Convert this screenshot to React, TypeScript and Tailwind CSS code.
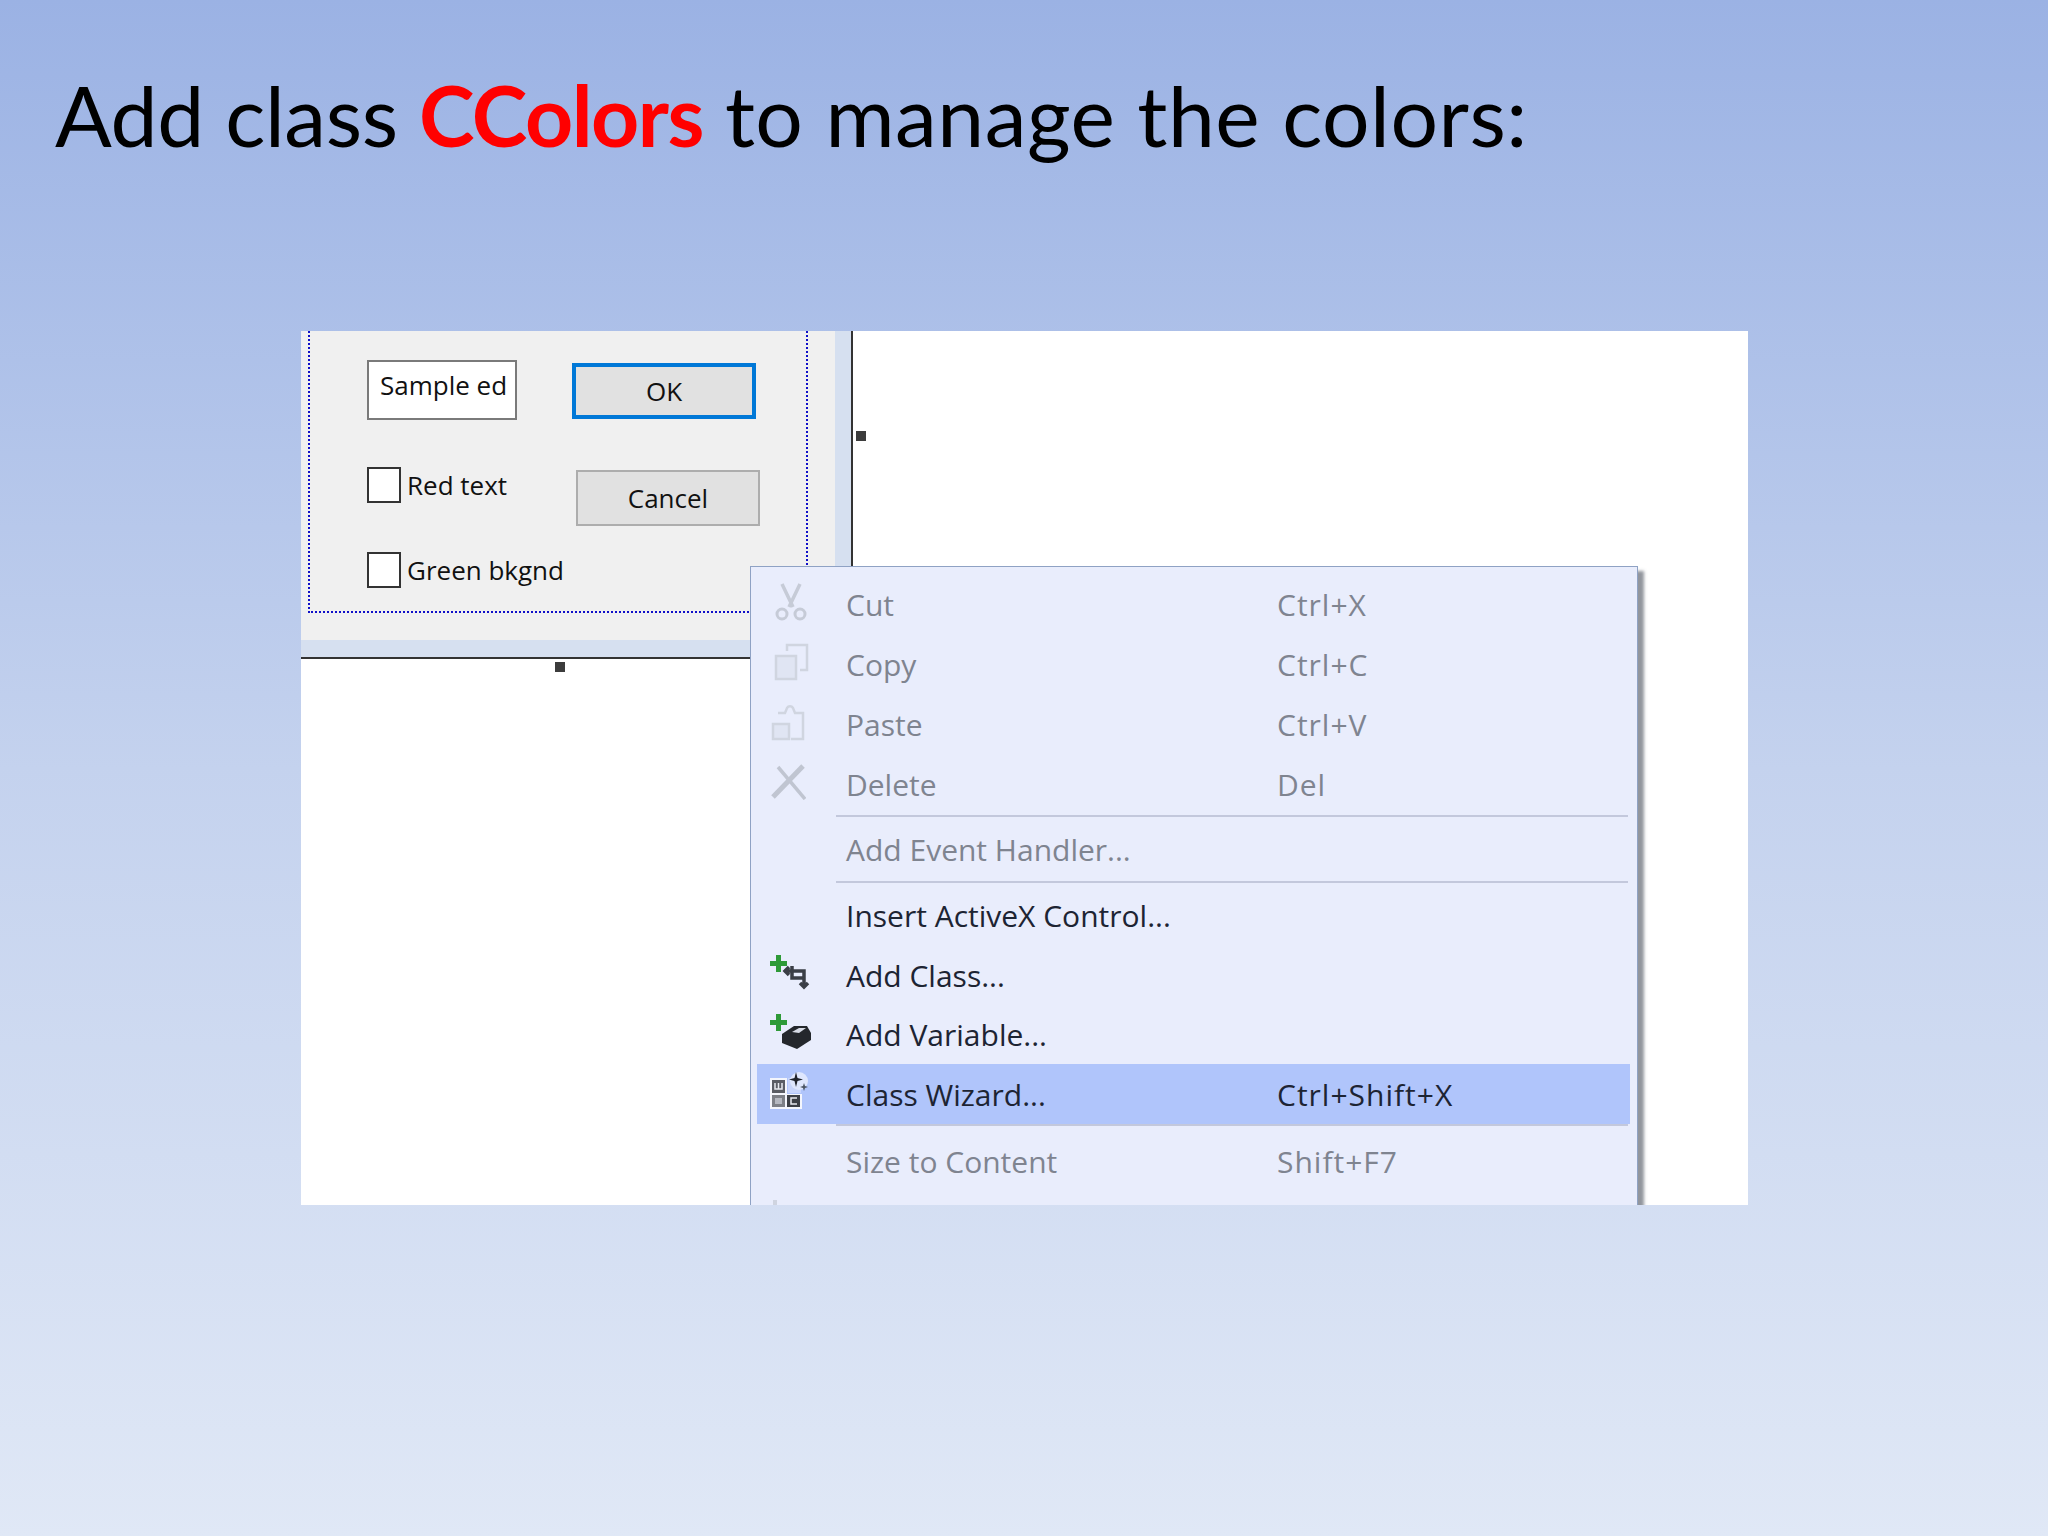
const uiFont = "font-['Open_Sans',sans-serif]";

const CutIcon = () => (
  <svg className="ml-[5px]" width="32" height="38" viewBox="0 0 32 38" fill="none" stroke="#c6cbd7" strokeWidth="3.500">
    <path d="M7 1l11 23M25 1L14 24" />
    <circle cx="7" cy="31" r="5" strokeWidth="3" />
    <circle cx="25" cy="31" r="5" strokeWidth="3" />
  </svg>
);

const CopyIcon = () => (
  <svg className="ml-[4px]" width="36" height="38" viewBox="0 0 36 38" fill="none" stroke="#d0d5e0" strokeWidth="2.5">
    <rect x="2" y="13" width="20" height="23" fill="#e0e5f3" />
    <path d="M13 8V2h20v25h-7" />
  </svg>
);

const PasteIcon = () => (
  <svg className="ml-[1px]" width="34" height="38" viewBox="0 0 34 38" fill="none" stroke="#d0d5e0" strokeWidth="2.5">
    <path d="M7 10h7l2-5a3.500 3.500 0 0 1 6 0l2 5h8v26H20" />
    <rect x="2" y="21" width="16" height="15" fill="#e0e5f3" />
  </svg>
);

const DeleteIcon = () => (
  <svg width="36" height="36" viewBox="0 0 36 36" fill="none" stroke="#c0c5d1">
    <path d="M33 2L3 33" strokeWidth="5" />
    <path d="M8 3l27 32" strokeWidth="3.500" />
  </svg>
);

const AddClassIcon = () => (
  <svg width="42" height="36" viewBox="0 0 42 36">
    <path d="M6 0h5v6h6v5h-6v6H6v-6H0V6h6z" fill="#2e9a38" />
    <path d="M14 16h10M22 11v12h12v9M24 16h10v7M19 12l-4 4 4 4M38 28l-4 4-4-4" fill="none" stroke="#3a3e46" strokeWidth="3.500" />
  </svg>
);

const AddVariableIcon = () => (
  <svg width="42" height="36" viewBox="0 0 42 36">
    <path d="M6 0h5v6h6v5h-6v6H6v-6H0V6h6z" fill="#2e9a38" />
    <path d="M12 20l12-8h13l4 7v7l-14 9-15-6z" fill="#24272c" />
    <path d="M22 18l7-4h7l-7 5z" fill="#d7dbe5" />
  </svg>
);

const ClassWizardIcon = () => (
  <svg width="40" height="40" viewBox="0 0 40 40">
    <path d="M0 6h17v16h15v15H0z" fill="#f4f6fc" />
    <rect x="18" y="6" width="13" height="15" fill="#c8d5fb" />
    <circle cx="29" cy="9" r="9" fill="#dfe7fd" />
    <rect x="2" y="8" width="13" height="13" fill="#5a5d64" />
    <rect x="2" y="23" width="13" height="12" fill="#7d8087" />
    <rect x="17" y="23" width="13" height="12" fill="#3c3f45" />
    <path d="M5 11v6h7v-6M8.500 11v6" stroke="#e8eaf0" strokeWidth="1.500" fill="none" />
    <path d="M5 26h7v6H5z" fill="#b5b8c0" />
    <path d="M27 26h-6v6h6" stroke="#e8eaf0" strokeWidth="1.500" fill="none" />
    <path d="M26 0l1.500 6L33 7.500 27.500 9 26 15l-1.500-6L19 7.500 24.500 6z" fill="#20232a" />
    <path d="M34 11l1 3 3 1-3 1-1 3-1-3-3-1 3-1z" fill="#4b5563" />
  </svg>
);

const items = [
  { label: "Cut", keys: "Ctrl+X", icon: <CutIcon />, off: true, h: "h-[60px]" },
  { label: "Copy", keys: "Ctrl+C", icon: <CopyIcon />, off: true, h: "h-[60px]" },
  { label: "Paste", keys: "Ctrl+V", icon: <PasteIcon />, off: true, h: "h-[60px]" },
  { label: "Delete", keys: "Del", icon: <DeleteIcon />, off: true, h: "h-[61px]" },
  { sep: true },
  { label: "Add Event Handler...", off: true, h: "h-[64px]" },
  { sep: true },
  { label: "Insert ActiveX Control...", h: "h-[62px] pt-[3px]" },
  { label: "Add Class...", icon: <AddClassIcon />, h: "h-[60px]" },
  { label: "Add Variable...", icon: <AddVariableIcon />, h: "h-[59px]" },
  { label: "Class Wizard...", keys: "Ctrl+Shift+X", icon: <ClassWizardIcon />, active: true, h: "h-[60px]" },
  { sep: true },
  { label: "Size to Content", keys: "Shift+F7", off: true, h: "h-[67px] pt-[3px]" },
];

const DialogCheck = ({ label }: { label: string }) => (
  <div className="flex items-center gap-[6px] whitespace-nowrap">
    <div className="w-[34px] h-[36px] bg-white border-2 border-[#333333]" />
    <span className="text-[26px] leading-[36px] text-[#111111]">{label}</span>
  </div>
);

const ContextMenu = () => (
  <div className={`absolute left-[449px] top-[235px] w-[888px] h-[700px] pt-[7px] bg-[#e9edfc] border border-[#8fa2c4] shadow-[6px_5px_3px_rgba(100,105,115,0.7)] ${uiFont}`}>
    {items.map((item, i) =>
      item.sep ? (
        <div key={i} className="ml-[85px] mr-[9px] h-[2px] bg-[#c3c8dc]" />
      ) : (
        <div
          key={i}
          className={`flex items-center ml-[6px] mr-[7px] ${item.h} text-[30px] ${item.active ? "bg-[#b0c5fb]" : ""} ${item.off ? "text-[#7f8490]" : "text-[#1d2433]"}`}
        >
          <div className="w-[89px] pl-[13px] -mt-[5px] shrink-0 flex items-center">{item.icon}</div>
          <span className="w-[431px] shrink-0">{item.label}</span>
          <span className="tracking-[1px]">{item.keys}</span>
        </div>
      )
    )}
    <div className="ml-[22px] mt-[7px] w-[4px] h-[8px] bg-[#cfd4e0]" />
  </div>
);

export default function App() {
  return (
    <div className="w-[2048px] h-[1536px] overflow-hidden bg-gradient-to-b from-[#9bb2e4] via-[#c4d2ee] via-50% to-[#e0e8f6]">
      <h1 className="pl-[55px] pt-[67px] h-[331px] text-[84px] leading-[96px] text-black font-['Lato',sans-serif] tracking-[0.5px]">
        <span className="tracking-[-0.35px]">Add class </span>
        <span className="font-bold text-[#ff0000] tracking-[-1.5px]">CColors</span> to manage the colors:
      </h1>

      <div className={`relative ml-[301px] w-[1447px] h-[874px] bg-white overflow-hidden ${uiFont}`}>
        <div className="w-[552px] h-[328px] bg-[#d6e0f0] border-r-2 border-b-2 border-[#333333]">
          <div className="w-[534px] h-[309px] bg-[#f0f0f0] pl-[7px]">
            <div className="w-[500px] h-[282px] flex pl-[57px] pt-[29px] border-x-2 border-b-2 border-dotted border-[#1010c8]">
              <div className="w-[205px] shrink-0 flex flex-col">
                <div className="shrink-0 w-[150px] h-[60px] bg-white border-2 border-[#7a7a7a] pl-[11px] pt-[1px] text-[26px] leading-[44px] text-[#111111] overflow-hidden whitespace-nowrap">
                  Sample ed
                </div>
                <div className="mt-[47px]">
                  <DialogCheck label="Red text" />
                </div>
                <div className="mt-[49px]">
                  <DialogCheck label="Green bkgnd" />
                </div>
              </div>
              <div className="flex flex-col gap-[51px] pt-[3px]">
                <div className="w-[184px] h-[56px] flex items-center justify-center bg-[#e1e1e1] border-4 border-[#0078d7] text-[26px] text-[#111111]">
                  OK
                </div>
                <div className="ml-[4px] w-[184px] h-[56px] flex items-center justify-center bg-[#e1e1e1] border-2 border-[#adadad] text-[26px] text-[#111111]">
                  Cancel
                </div>
              </div>
            </div>
          </div>
        </div>

        {/* resize handles */}
        <div className="absolute left-[254px] top-[331px] w-[10px] h-[10px] bg-[#3c3c3c]" />
        <div className="absolute left-[555px] top-[100px] w-[10px] h-[10px] bg-[#3c3c3c]" />

        <ContextMenu />
      </div>
    </div>
  );
}
